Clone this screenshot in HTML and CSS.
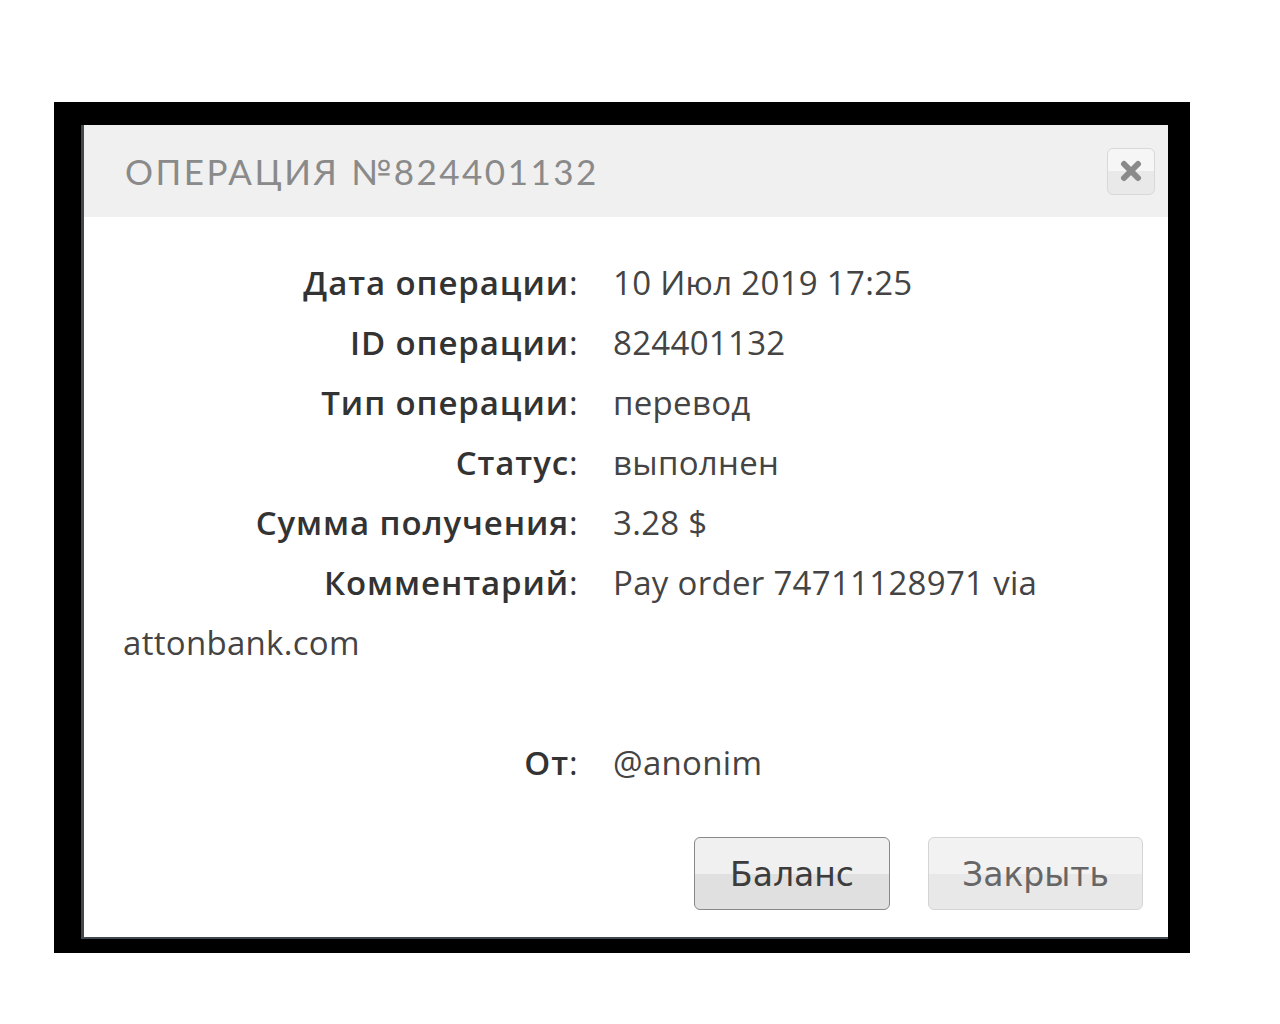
FILE: index.html
```html
<html>
<head>
<meta http-equiv="Content-Type" content="text/html; charset=UTF-8">
<link rel="stylesheet" href="styles.css">
</head>
<body>
<div class="frame">
  <div class="dialog">
    <div class="dialog-head">
      <span class="dialog-title">ОПЕРАЦИЯ №824401132</span>
      <span class="close-btn">
        <svg width="22" height="22" viewBox="0 0 22 22"><path d="M4 4 L18 18 M18 4 L4 18" stroke="#8a8a8a" stroke-width="6" stroke-linecap="round"/></svg>
      </span>
    </div>
    <div class="dialog-body">
      <div class="row"><span class="label"><b>Дата операции</b>:</span><span class="value">10 Июл 2019 17:25</span></div>
      <div class="row"><span class="label"><b>ID операции</b>:</span><span class="value">824401132</span></div>
      <div class="row"><span class="label"><b>Тип операции</b>:</span><span class="value">перевод</span></div>
      <div class="row"><span class="label"><b>Статус</b>:</span><span class="value">выполнен</span></div>
      <div class="row"><span class="label"><b>Сумма получения</b>:</span><span class="value">3.28 $</span></div>
      <div class="row"><span class="label"><b>Комментарий</b>:</span><span class="value">Pay order 74711128971 via attonbank.com</span></div>
      <div class="row row-from"><span class="label"><b>От</b>:</span><span class="value">@anonim</span></div>
    </div>
    <div class="dialog-buttons">
      <span class="btn btn-main">Баланс</span>
      <span class="btn">Закрыть</span>
    </div>
  </div>
</div>
</body>
</html>
```
FILE: styles.css
```css
BODY
{
  background: white;
  margin: 0px;
  padding: 0px;
}
.frame
{
  margin: 102px 0 0 54px;
  width: 1087px;
  background: black;
  padding: 23px 22px 14px 27px;
}
.dialog
{
  background: white;
  border-left: 3px solid #3f4950;
  border-bottom: 2px solid #3f4950;
  height: 812px;
  display: flex;
  flex-direction: column;
}
.dialog-head
{
  height: 92px;
  background: #f0f0f0;
  display: flex;
  align-items: center;
  justify-content: space-between;
  padding: 0 13px 0 41px;
}
.dialog-title
{
  font-family: Lato, "Open Sans", sans-serif;
  font-size: 35px;
  letter-spacing: 2.5px;
  color: #8a8a8a;
}
.close-btn
{
  width: 46px;
  height: 45px;
  border: 1px solid #d8d8d8;
  border-radius: 6px;
  background: linear-gradient(#f6f6f6 50%, #e9e9e9 50%);
  display: flex;
  align-items: center;
  justify-content: center;
}
.dialog-body
{
  padding: 36px 39px 0 39px;
  font-family: "Open Sans", sans-serif;
  font-size: 33px;
  letter-spacing: 0.3px;
  line-height: 60px;
  color: #444;
  flex: 1;
}
.label
{
  display: inline-block;
  width: 455px;
  text-align: right;
  margin-right: 35px;
  color: #333;
}
.label b { font-weight: 600; letter-spacing: 0.9px; }
.row-from { margin-top: 60px; }
.dialog-buttons
{
  display: flex;
  justify-content: flex-end;
  gap: 38px;
  padding: 0 25px 27px 0;
}
.btn
{
  font-family: "DejaVu Sans", Verdana, sans-serif;
  font-size: 33px;
  height: 71px;
  line-height: 74px;
  padding: 0 33px;
  border: 1px solid #d4d4d4;
  border-radius: 6px;
  background: linear-gradient(#f2f2f2 50%, #e8e8e8 50%);
  color: #666;
}
.btn-main
{
  border-color: #888;
  background: linear-gradient(#f0f0f0 50%, #e0e0e0 50%);
  color: #3c3c3c;
  padding: 0 35px;
}
```
